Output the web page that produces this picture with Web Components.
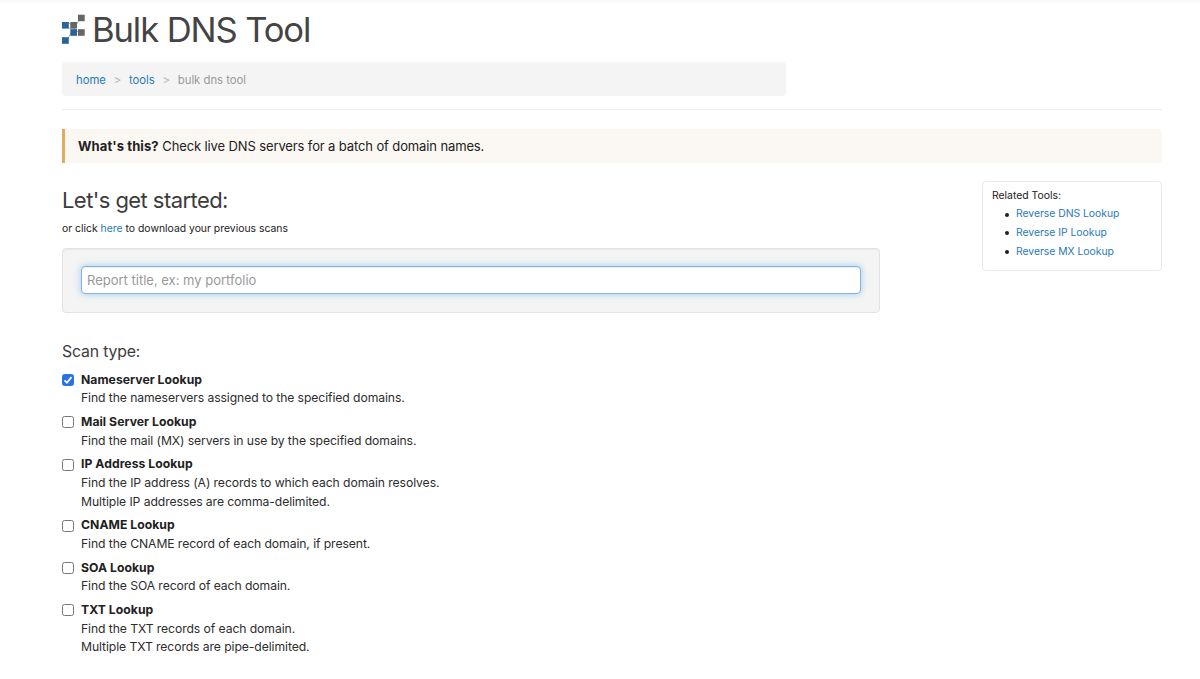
<!DOCTYPE html>
<html lang="en">
<head>
<meta charset="utf-8">
<title>Bulk DNS Tool</title>
<style>
    body{
        margin: 0;
        background: #fff;
        color: #212121;
        font-family: Inter, "Liberation Sans", sans-serif;
        font-size: 13px;
        line-height: 18.8px;
        --link: #2a7ab8;
    }
    a{ color: var(--link); text-decoration: none; }
</style>
</head>
<body>
<dns-page>
    <page-title slot="header">Bulk DNS Tool</page-title>
    <bread-crumbs slot="header">
        <a href="#">home</a>
        <a href="#">tools</a>
        <span>bulk dns tool</span>
    </bread-crumbs>
    <call-out slot="header"><b slot="title">What's this?</b> Check live DNS servers for a batch of domain names.</call-out>

    <report-form>or click <a href="#">here</a> to download your previous scans</report-form>
    <scan-types>
        <scan-option name="Nameserver Lookup" checked>Find the nameservers assigned to the specified domains.</scan-option>
        <scan-option name="Mail Server Lookup">Find the mail (MX) servers in use by the specified domains.</scan-option>
        <scan-option name="IP Address Lookup">Find the IP address (A) records to which each domain resolves.<br>Multiple IP addresses are comma-delimited.</scan-option>
        <scan-option name="CNAME Lookup">Find the CNAME record of each domain, if present.</scan-option>
        <scan-option name="SOA Lookup">Find the SOA record of each domain.</scan-option>
        <scan-option name="TXT Lookup">Find the TXT records of each domain.<br>Multiple TXT records are pipe-delimited.</scan-option>
    </scan-types>

    <related-tools slot="side">
        <a href="#">Reverse DNS Lookup</a>
        <a href="#">Reverse IP Lookup</a>
        <a href="#">Reverse MX Lookup</a>
    </related-tools>
</dns-page>

<script>
//shared base: each component only supplies its html
class BaseElement extends HTMLElement {
    constructor(){
        super()
        this.shadowEl = this.attachShadow({mode: 'open'})
        this.shadowEl.innerHTML = this.html()
    }
}

class DnsPage extends BaseElement {
    html(){
        return `
            <style>
                :host{
                    display: block;
                    box-sizing: border-box;
                    height: 679px;
                    padding: 10px 38px 0 62px;
                    overflow: hidden;
                    background: linear-gradient(#f8f8f8, #fff 5px);
                }
                .columns{
                    display: flex;
                    justify-content: space-between;
                    align-items: flex-start;
                    padding-top: 18px;
                }
                main{ width: 818px; }
            </style>
            <slot name="header"></slot>
            <div class="columns">
                <main><slot></slot></main>
                <slot name="side"></slot>
            </div>
        `
    }
}

class PageTitle extends BaseElement {
    html(){
        return `
            <style>
                :host{ display: flex; gap: 7px; height: 52px; }
                svg{ margin-top: 4px; flex: none; }
                h1{
                    margin: 0;
                    font-size: 34.6px;
                    font-weight: 400;
                    line-height: 39px;
                    letter-spacing: -1.1px;
                    color: #444;
                    white-space: nowrap;
                }
            </style>
            <svg width="23" height="30" viewBox="0 0 23 30">
                <path d="M6 8 L17 19 M6 24 L19 3 M3 12 L13 17" stroke="#a3b4c1" stroke-width="1" fill="none"/>
                <g fill="#666">
                    <rect x="16" y="0.7" width="6.7" height="6.5"/>
                    <rect x="8.3" y="8" width="6.7" height="6.6"/>
                    <rect x="16" y="15.2" width="6.7" height="6.6"/>
                </g>
                <g fill="#2a6496">
                    <rect x="0" y="8" width="6.8" height="6.6"/>
                    <rect x="8.3" y="15.2" width="6.7" height="6.6"/>
                    <rect x="0" y="23.2" width="6.8" height="6.6"/>
                </g>
            </svg>
            <h1><slot></slot></h1>
        `
    }
}

class BreadCrumbs extends BaseElement {
    html(){
        return `
            <style>
                :host{ display: block; margin-bottom: 13px; }
                nav{
                    display: flex;
                    align-items: center;
                    box-sizing: border-box;
                    width: 724px;
                    height: 34px;
                    padding: 2px 14px 0;
                    border-radius: 4px;
                    background: #f4f4f4;
                    font-size: 11.3px;
                }
                ::slotted(span){ color: #999; }
                i{
                    width: 23px;
                    text-align: center;
                    font-style: normal;
                    font-size: 12px;
                    color: #bbb;
                }
            </style>
            <nav></nav>
        `
    }

    connectedCallback(){
        //one named slot per crumb, with a separator in between
        const navEl = this.shadowEl.querySelector('nav')
        navEl.innerHTML = [...this.children].map((crumb, i) => {
            crumb.slot = 'crumb-' + i
            return `<slot name="crumb-${i}"></slot>`
        }).join('<i>&gt;</i>')
    }
}

class CallOut extends BaseElement {
    html(){
        return `
            <style>
                :host{ display: block; padding-top: 19px; border-top: 1px solid #eee; }
                div{
                    box-sizing: border-box;
                    height: 34px;
                    padding: 0 13px;
                    border-left: 3px solid #e0ad60;
                    border-radius: 0 3px 3px 0;
                    background: #fbf7f3;
                    line-height: 34px;
                    letter-spacing: -0.12px;
                }
                ::slotted(b){ font-weight: 700; letter-spacing: 0.1px; }
            </style>
            <div><slot name="title"></slot> <slot></slot></div>
        `
    }
}

class ReportForm extends BaseElement {
    html(){
        return `
            <style>
                :host{ display: block; }
                h3{
                    margin: 0;
                    font-size: 22px;
                    font-weight: 400;
                    line-height: 39px;
                    letter-spacing: -0.57px;
                    color: #3c3c3c;
                }
                p{ margin: 0; font-size: 10.4px; line-height: 18px; }
                .well{
                    box-sizing: border-box;
                    height: 65px;
                    margin-top: 10px;
                    padding: 17px 18px;
                    border: 1px solid #e3e3e3;
                    border-radius: 4px;
                    background: #f4f4f4;
                    box-shadow: inset 0 1px 1px rgba(0, 0, 0, .05);
                }
                input{
                    display: block;
                    box-sizing: border-box;
                    width: 100%;
                    height: 28px;
                    padding: 0 5px;
                    border: 1px solid #82b4e6;
                    border-radius: 4px;
                    outline: 0;
                    background: #fff;
                    font: 13px Inter, "Liberation Sans", sans-serif;
                    box-shadow: inset 0 1px 1px rgba(0, 0, 0, .075), 0 0 7px rgba(102, 175, 233, .6);
                }
                input::placeholder{ color: #999; opacity: 1; }
            </style>
            <h3>Let's get started:</h3>
            <p><slot></slot></p>
            <div class="well"><input type="text" placeholder="Report title, ex: my portfolio"></div>
        `
    }
}

class ScanTypes extends BaseElement {
    html(){
        return `
            <style>
                :host{ display: block; padding-top: 29px; }
                h4{
                    margin: 0 0 8.6px;
                    font-size: 15.8px;
                    font-weight: 400;
                    line-height: 20px;
                    letter-spacing: -0.15px;
                    color: #3c3c3c;
                }
            </style>
            <h4>Scan type:</h4>
            <slot></slot>
        `
    }
}

class ScanOption extends BaseElement {
    html(){
        return `
            <style>
                :host{ display: block; margin-bottom: 4.7px; font-size: 12.2px; }
                label{ display: flex; align-items: center; gap: 7px; font-weight: 700; letter-spacing: 0.04px; }
                input{
                    appearance: none;
                    box-sizing: border-box;
                    width: 12px;
                    height: 12px;
                    margin: 0;
                    border: 1px solid #767676;
                    border-radius: 2.5px;
                    background: #fff;
                }
                .box{ display: grid; }
                .box > *{ grid-area: 1 / 1; }
                svg{ display: none; }
                input:checked{ border-color: #2871e8; background: #2871e8; }
                input:checked + svg{ display: block; }
                p{ margin: 0 0 0 19px; letter-spacing: -0.09px; color: #2d2d2d; }
            </style>
            <label>
                <span class="box">
                    <input type="checkbox">
                    <svg width="12" height="12" viewBox="0 0 12 12">
                        <path d="M2.5 6.3 L4.9 8.7 L9.5 3.1" fill="none" stroke="#fff" stroke-width="1.8"/>
                    </svg>
                </span>
                <span class="name"></span>
            </label>
            <p><slot></slot></p>
        `
    }

    connectedCallback(){
        this.shadowEl.querySelector('.name').textContent = this.getAttribute('name')
        this.shadowEl.querySelector('input').checked = this.hasAttribute('checked')
    }
}

class RelatedTools extends BaseElement {
    html(){
        return `
            <style>
                :host{
                    display: block;
                    box-sizing: border-box;
                    width: 180px;
                    height: 90px;
                    padding: 4.5px 9px;
                    border: 1px solid #e8e8e8;
                    border-radius: 4px;
                    font-size: 10.4px;
                }
                ul{ margin: 0; padding-left: 13px; list-style: none; }
                li{ display: flex; align-items: center; gap: 7px; letter-spacing: -0.03px; }
                li::before{
                    content: "";
                    width: 4px;
                    height: 4px;
                    border-radius: 50%;
                    background: #212121;
                }
            </style>
            Related Tools:
            <ul></ul>
        `
    }

    connectedCallback(){
        const listEl = this.shadowEl.querySelector('ul')
        listEl.innerHTML = [...this.children].map((link, i) => {
            link.slot = 'tool-' + i
            return `<li><slot name="tool-${i}"></slot></li>`
        }).join('')
    }
}

customElements.define('dns-page', DnsPage)
customElements.define('page-title', PageTitle)
customElements.define('bread-crumbs', BreadCrumbs)
customElements.define('call-out', CallOut)
customElements.define('report-form', ReportForm)
customElements.define('scan-types', ScanTypes)
customElements.define('scan-option', ScanOption)
customElements.define('related-tools', RelatedTools)
</script>
</body>
</html>
